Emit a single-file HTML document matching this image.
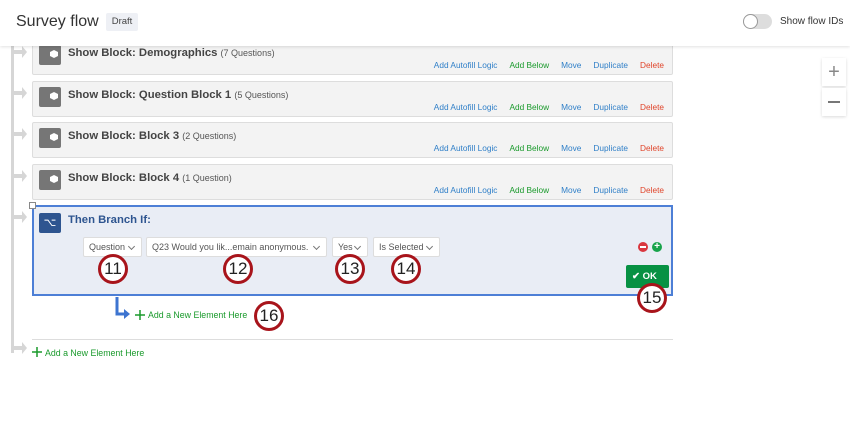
<!DOCTYPE html>
<html><head><meta charset="utf-8"><style>
*{box-sizing:border-box;margin:0;padding:0}
body{width:850px;height:425px;background:#fff;font-family:"Liberation Sans",sans-serif;position:relative;overflow:hidden}
.abs{position:absolute}
.hdr{left:0;top:0;width:850px;height:46px;background:#fff;box-shadow:0 1px 3px rgba(0,0,0,.12);z-index:5}
.blk{left:32px;width:641px;height:36px;background:#f3f3f3;border:1px solid #ddd;border-radius:2px}
.ico{left:6px;top:5px;width:22px;height:20px;background:#767676;border-radius:2px}
.ttl{left:35px;top:7px;font-size:11.3px;font-weight:bold;color:#444}
.ttl span{font-weight:normal;font-size:9px;color:#555}
.lnk{right:8px;bottom:4px;font-size:8.3px;white-space:nowrap}
.lnk span{margin-left:12px}
.dd{top:237px;height:20px;background:#fff;border:1px solid #ddd;border-radius:2px;font-size:9px;color:#555;line-height:18px;padding-left:5px;white-space:nowrap;overflow:hidden}
.dd:after{content:"";position:absolute;right:7px;top:6px;width:4px;height:4px;border-right:1px solid #777;border-bottom:1px solid #777;transform:rotate(45deg)}
.num{width:30px;height:30px;border:3px solid #a8141b;border-radius:50%;background:#fff;color:#222;font-size:17px;text-align:center;line-height:24px;z-index:3}
.grn{color:#1a9a2c}
</style></head><body>
<div class="abs hdr">
 <div class="abs" style="left:16px;top:13px;font-size:16px;color:#333">Survey flow</div>
 <div class="abs" style="left:106px;top:13px;width:32px;height:18px;background:#eef0f5;border-radius:2px;font-size:9.5px;color:#444;text-align:center;line-height:18px">Draft</div>
 <div class="abs" style="left:743px;top:14px;width:29px;height:15px;background:#ddd;border-radius:8px"><div class="abs" style="left:0;top:0;width:15px;height:15px;border:1px solid #999;border-radius:50%;background:#fff"></div></div>
 <div class="abs" style="left:780px;top:16px;font-size:10px;color:#333">Show flow IDs</div>
</div>
<div class="abs" style="left:11px;top:46px;width:3px;height:307px;background:#d6d6d6"></div>

<div class="abs blk" style="top:39px"><div class="abs ico"></div><div class="abs ttl">Show Block: Demographics <span>(7 Questions)</span></div><div class="abs lnk"><span style="color:#2f7fc8">Add Autofill Logic</span><span class="grn">Add Below</span><span style="color:#2f7fc8">Move</span><span style="color:#2f7fc8">Duplicate</span><span style="color:#e0442a">Delete</span></div></div>
<div class="abs blk" style="top:81px"><div class="abs ico"></div><div class="abs ttl">Show Block: Question Block 1 <span>(5 Questions)</span></div><div class="abs lnk"><span style="color:#2f7fc8">Add Autofill Logic</span><span class="grn">Add Below</span><span style="color:#2f7fc8">Move</span><span style="color:#2f7fc8">Duplicate</span><span style="color:#e0442a">Delete</span></div></div>
<div class="abs blk" style="top:122px"><div class="abs ico"></div><div class="abs ttl">Show Block: Block 3 <span>(2 Questions)</span></div><div class="abs lnk"><span style="color:#2f7fc8">Add Autofill Logic</span><span class="grn">Add Below</span><span style="color:#2f7fc8">Move</span><span style="color:#2f7fc8">Duplicate</span><span style="color:#e0442a">Delete</span></div></div>
<div class="abs blk" style="top:164px"><div class="abs ico"></div><div class="abs ttl">Show Block: Block 4 <span>(1 Question)</span></div><div class="abs lnk"><span style="color:#2f7fc8">Add Autofill Logic</span><span class="grn">Add Below</span><span style="color:#2f7fc8">Move</span><span style="color:#2f7fc8">Duplicate</span><span style="color:#e0442a">Delete</span></div></div>

<svg class="abs" style="left:0;top:0" width="850" height="425">
 <g fill="#d6d6d6"><path d="M14 91h8v-4l5 6-5 6v-4h-8z"/><path d="M14 132h8v-4l5 6-5 6v-4h-8z"/><path d="M14 174h8v-4l5 6-5 6v-4h-8z"/><path d="M14 215h8v-4l5 6-5 6v-4h-8z"/><path d="M14 346h8v-4l5 6-5 6v-4h-8z"/><path d="M14 50h8v-4l5 6-5 6v-4h-8z"/></g>
 <g fill="#fff"><path d="M50 52l4-2 4 2v4l-4 2-4-2z"/><path d="M50 94l4-2 4 2v4l-4 2-4-2z"/><path d="M50 135l4-2 4 2v4l-4 2-4-2z"/><path d="M50 177l4-2 4 2v4l-4 2-4-2z"/></g>
 <path d="M117 297v17h8" fill="none" stroke="#3d74d0" stroke-width="3"/><path d="M124 309l6 5-6 5z" fill="#3d74d0"/>
 <path d="M135 315h10M140 310v10" stroke="#1a9a2c" stroke-width="1.5"/>
 <path d="M32 352h10M37 347v10" stroke="#1a9a2c" stroke-width="1.5"/>
 <line x1="32" y1="339.5" x2="673" y2="339.5" stroke="#ddd"/>
</svg>

<div class="abs" style="left:32px;top:205px;width:641px;height:91px;background:#e9edf5;border:2px solid #4d7fd6"></div>
<div class="abs" style="left:29px;top:202px;width:7px;height:7px;border:1px solid #888;background:#fff;z-index:2"></div>
<div class="abs" style="left:39px;top:213px;width:22px;height:20px;background:#2e5590;border-radius:2px;color:#fff;font-size:11px;text-align:center;line-height:20px">⌥</div>
<div class="abs" style="left:68px;top:214px;font-size:11.3px;font-weight:bold;color:#2e5590">Then Branch If:</div>
<div class="abs dd" style="left:83px;width:59px">Question</div>
<div class="abs dd" style="left:146px;width:181px">Q23 Would you lik...emain anonymous.</div>
<div class="abs dd" style="left:332px;width:36px">Yes</div>
<div class="abs dd" style="left:373px;width:67px">Is Selected</div>
<div class="abs" style="left:638px;top:242px;width:10px;height:10px;border-radius:50%;background:#d9363e"><div class="abs" style="left:2px;top:4px;width:6px;height:2px;background:#fff"></div></div>
<div class="abs" style="left:652px;top:242px;width:10px;height:10px;border-radius:50%;background:#17a34a;color:#fff;font-size:10px;line-height:10px;text-align:center;font-weight:bold">+</div>
<div class="abs" style="left:626px;top:265px;width:43px;height:23px;background:#079143;border-radius:2px;color:#fff;font-size:9.5px;font-weight:bold;line-height:23px;padding-left:6px">✔ OK</div>

<div class="abs num" style="left:98px;top:254px">11</div>
<div class="abs num" style="left:223px;top:254px">12</div>
<div class="abs num" style="left:335px;top:254px">13</div>
<div class="abs num" style="left:391px;top:254px">14</div>
<div class="abs num" style="left:637px;top:283px">15</div>
<div class="abs num" style="left:254px;top:301px">16</div>

<div class="abs grn" style="left:148px;top:310px;font-size:8.8px">Add a New Element Here</div>
<div class="abs grn" style="left:45px;top:348px;font-size:8.8px">Add a New Element Here</div>

<div class="abs" style="left:822px;top:58px;width:24px;height:28px;background:#fff;box-shadow:0 1px 3px rgba(0,0,0,.15);color:#888;font-size:20px;text-align:center;line-height:28px">+</div>
<div class="abs" style="left:822px;top:88px;width:24px;height:28px;background:#fff;box-shadow:0 1px 3px rgba(0,0,0,.15)"><div class="abs" style="left:6px;top:13px;width:12px;height:1.5px;background:#777"></div></div>
</body></html>
